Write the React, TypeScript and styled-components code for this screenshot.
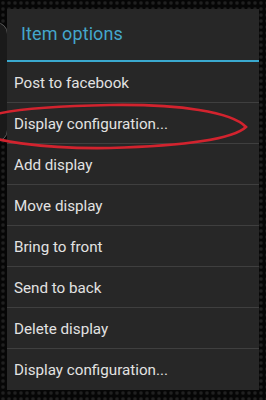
import React from "react";
import styled, { createGlobalStyle } from "styled-components";

const Global = createGlobalStyle`
  html, body { margin: 0; padding: 0; background: #050505; }
  #root { width: 266px; height: 400px; }
`;

const Page = styled.div`
  position: relative;
  width: 266px;
  height: 400px;
  box-sizing: border-box;
  padding: 9px 7px 10px 7px;
  overflow: hidden;
  background-color: #060606;
  background-image: radial-gradient(circle at 50% 50%, #262626 0, #1a1a1a 1.4px, transparent 2.4px);
  background-size: 6px 6px;
  font-family: Roboto, "Noto Sans", sans-serif;
`;

const BehindCard = styled.div`
  position: absolute;
  left: -24px;
  top: 22px;
  width: 30px;
  height: 118px;
  border: 1px solid #5a5a5a;
  border-radius: 12px;
  background: #1a1a1a;
`;

const Panel = styled.div`
  position: relative;
  display: flex;
  flex-direction: column;
  height: 100%;
  background: #272727;
`;

const Header = styled.div`
  display: flex;
  align-items: center;
  height: 53px;
  box-sizing: border-box;
  padding: 0 0 2px 14px;
  border-bottom: 2px solid #3aa9cf;
  color: #44a6cb;
  font-size: 18px;
  letter-spacing: 0.1px;
`;

const Item = styled.div<{ $first?: boolean }>`
  display: flex;
  align-items: center;
  height: ${(p) => (p.$first ? "40px" : "41px")};
  box-sizing: border-box;
  padding: 1px 0 0 7px;
  border-top: ${(p) => (p.$first ? "none" : "1px solid #3f3f3f")};
  color: #e2e2e2;
  font-size: 15.2px;
`;

const Mark = styled.svg`
  position: absolute;
  left: 0;
  top: 0;
  width: 266px;
  height: 400px;
  pointer-events: none;
`;

const items = [
  "Post to facebook",
  "Display configuration...",
  "Add display",
  "Move display",
  "Bring to front",
  "Send to back",
  "Delete display",
  "Display configuration...",
];

export default function App() {
  return (
    <Page>
      <Global />
      <BehindCard />
      <Panel>
        <Header>Item options</Header>
        {items.map((t, i) => (
          <Item key={i} $first={i === 0}>
            {t}
          </Item>
        ))}
      </Panel>
      <Mark viewBox="0 0 266 400">
        <path
          d="M246,127 C232,112 180,104 110,105 C50,106 -20,110 -30,126 C-20,142 50,149 110,148 C180,146 232,140 246,127 Z"
          fill="none"
          stroke="#d2232e"
          strokeWidth="2.6"
        />
      </Mark>
    </Page>
  );
}
